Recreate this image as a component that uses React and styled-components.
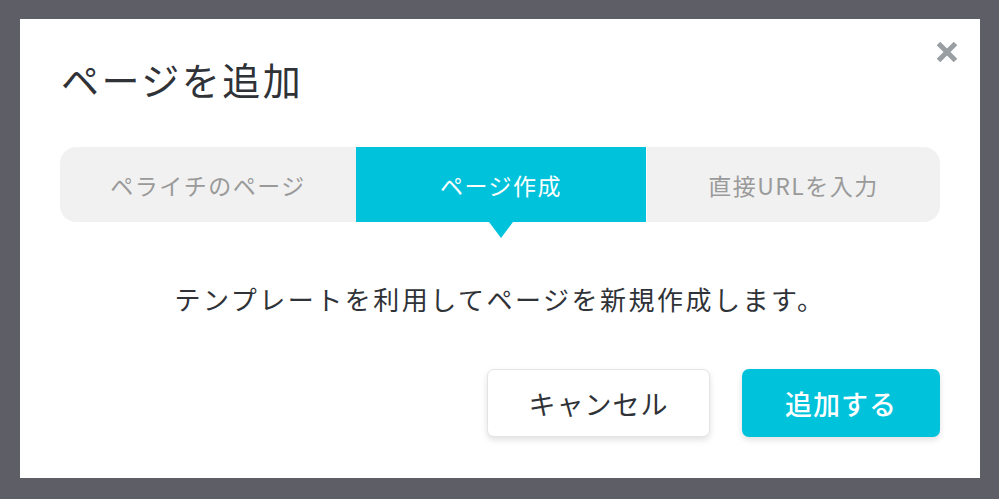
import React from "react";
import styled, { createGlobalStyle } from "styled-components";

const Global = createGlobalStyle`
  html, body { margin: 0; padding: 0; }
  body {
    background: #5e5e67;
    font-family: "Noto Sans CJK JP", "Noto Sans", sans-serif;
    width: 999px;
    height: 499px;
    overflow: hidden;
  }
`;

const Overlay = styled.div`
  padding: 19px 19px 0 20px;
  height: 499px;
  box-sizing: border-box;
`;

const Modal = styled.div`
  position: relative;
  background: #fff;
  width: 960px;
  height: 459px;
  box-sizing: border-box;
  padding: 0 40px;
  display: flex;
  flex-direction: column;
`;

const Title = styled.h1`
  margin: 41px 0 0 1px;
  font-size: 38px;
  line-height: 1;
  font-weight: 400;
  color: #2f3237;
  letter-spacing: 2.5px;
`;

const Close = styled.button`
  position: absolute;
  top: 22px;
  right: 22px;
  width: 22px;
  height: 22px;
  padding: 0;
  border: none;
  background: none;
  cursor: pointer;
  display: flex;
`;

const Tabs = styled.div`
  margin-top: 49px;
  display: grid;
  grid-template-columns: 296px 290px 294px;
  height: 75px;
  background: #f1f1f1;
  border-radius: 16px;
`;

const Tab = styled.div`
  position: relative;
  display: flex;
  align-items: center;
  justify-content: center;
  font-size: 23px;
  letter-spacing: 1.5px;
  color: ${(p) => (p.$active ? "#fff" : "#9a9a9a")};
  background: ${(p) => (p.$active ? "#00c3db" : "transparent")};
  border-left: ${(p) => (p.$divider ? "1px solid #fff" : "none")};
  ${(p) =>
    p.$active &&
    `
    &::after {
      content: "";
      position: absolute;
      left: 50%;
      bottom: -16px;
      transform: translateX(-50%);
      border-left: 12px solid transparent;
      border-right: 12px solid transparent;
      border-top: 16px solid #00c3db;
    }
  `}
`;

const Message = styled.p`
  margin: 62px 0 0;
  text-align: center;
  font-size: 26px;
  line-height: 30px;
  letter-spacing: 2.5px;
  color: #2f3237;
`;

const Footer = styled.div`
  margin-top: 55px;
  display: flex;
  justify-content: flex-end;
  align-items: center;
  gap: 32px;
`;

const Button = styled.button`
  height: 68px;
  width: ${(p) => p.$w}px;
  border-radius: 7px;
  font-family: inherit;
  font-size: 27px;
  letter-spacing: 1px;
  cursor: pointer;
  border: ${(p) => (p.$primary ? "none" : "1px solid #e4e4e4")};
  background: ${(p) => (p.$primary ? "#00c3db" : "#fff")};
  color: ${(p) => (p.$primary ? "#fff" : "#2f3237")};
  font-weight: ${(p) => (p.$primary ? 500 : 400)};
  box-shadow: 0 3px 6px rgba(0, 0, 0, 0.12);
`;

export default function App() {
  return (
    <>
      <Global />
      <Overlay>
        <Modal>
          <Close aria-label="閉じる">
            <svg width="22" height="22" viewBox="0 0 22 22">
              <path d="M2.5 2.5 L19.5 19.5 M19.5 2.5 L2.5 19.5" stroke="#999ea3" strokeWidth="5" strokeLinecap="butt" />
            </svg>
          </Close>
          <Title>ページを追加</Title>
          <Tabs>
            <Tab>ペライチのページ</Tab>
            <Tab $active>ページ作成</Tab>
            <Tab $divider>直接URLを入力</Tab>
          </Tabs>
          <Message>テンプレートを利用してページを新規作成します。</Message>
          <Footer>
            <Button $w={223}>キャンセル</Button>
            <Button $primary $w={198}>追加する</Button>
          </Footer>
        </Modal>
      </Overlay>
    </>
  );
}
